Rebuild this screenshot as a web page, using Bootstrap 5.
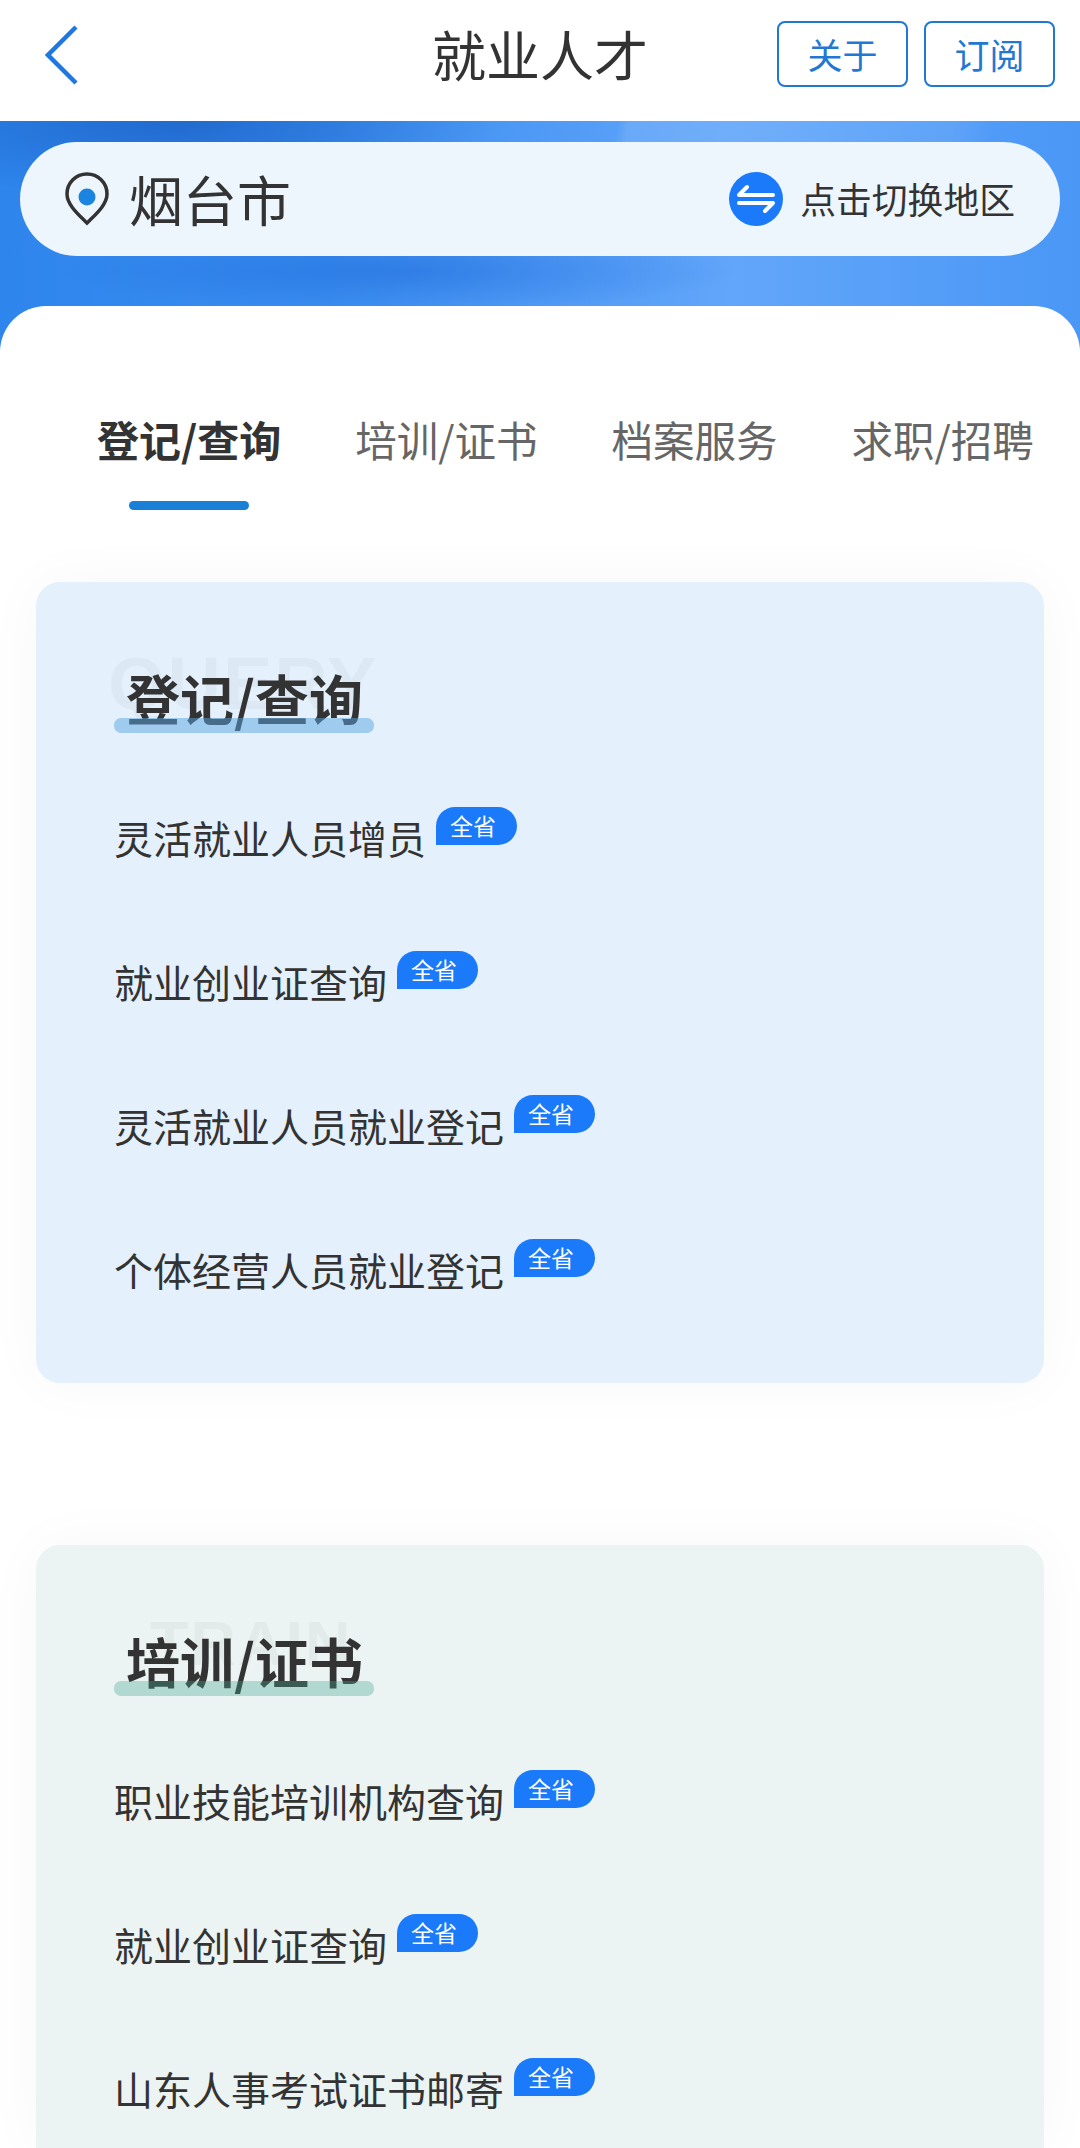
<!DOCTYPE html>
<html lang="zh">
<head>
  <meta charset="UTF-8" />
  <meta name="viewport" content="width=device-width, initial-scale=1" />
  <title>就业人才</title>
  <link href="https://cdn.jsdelivr.net/npm/bootstrap@5.3.2/dist/css/bootstrap.min.css" rel="stylesheet" />
  <style>
    body {
      background: #fff;
      color: #333;
      font-family: "Noto Sans CJK SC", "Liberation Sans", sans-serif;
    }
    .top-head { height: 121px; padding: 21px 25px 34px 45px; }
    .head-title { left: 0; right: 0; top: 23px; text-align: center; font-size: 54px; line-height: 62px; font-weight: 400; margin: 0; }
    .head-btn {
      width: 131px; height: 66px; padding: 0;
      font-size: 35px; line-height: 62px;
      color: #1f78d1; background: #fff;
      border: 2px solid #1f78d1; border-radius: 8px;
    }
    .banner {
      height: 230px; padding: 21px 20px 0;
      background:
        linear-gradient(100deg, transparent 57%, rgba(255,255,255,.1) 58%, rgba(255,255,255,.07) 88%, transparent 92%) no-repeat 0 0 / 100% 21px,
        radial-gradient(ellipse 320px 80px at 180px 0, rgba(20,85,185,.6), transparent),
        radial-gradient(ellipse 340px 40px at 400px 150px, rgba(25,100,215,.45), transparent),
        linear-gradient(90deg, #2e85ec 0%, #3a8df0 30%, #62a6fa 68%, #4a97f6 100%);
    }
    .city-pill { height: 114px; padding: 0 45px 0 45px; border-radius: 57px; background: #edf5fd; }
    .city-name { font-size: 54px; line-height: 60px; margin-left: 20px; }
    .swap-text { font-size: 35.8px; margin-left: 17px; }
    .sheet { margin-top: -45px; background: #fff; border-radius: 46px 46px 0 0; position: relative; padding: 0 36px; }
    .tab-row { height: 276px; padding: 108px 0 0 61px; gap: 74px; }
    .tab-item { position: relative; font-size: 41.5px; line-height: 50px; color: #666; }
    .tab-item.on { font-size: 42px; color: #333; font-weight: 700; }
    .tab-item.on::after {
      content: ""; position: absolute; left: 32px; top: 87px;
      width: 120px; height: 9px; border-radius: 5px; background: #1a7fd6;
    }
    .svc-card {
      padding: 0 0 0 78px;
      border-radius: 24px;
      box-shadow: 0 0 60px rgba(0,0,0,.035);
    }
    .svc-blue { height: 801px; margin-bottom: 162px; background: #e4f1fc; }
    .svc-green { height: 603px; border-radius: 24px 24px 0 0; overflow: hidden; background: #ebf4f3; }
    .svc-head { position: relative; height: 150px; padding-top: 86px; }
    .ghost {
      position: absolute; top: 67px; left: -6px;
      font-family: "Liberation Sans", sans-serif; font-size: 74px; line-height: 70px; font-weight: 700;
      letter-spacing: 2px; color: rgba(0,0,0,.03);
    }
    .svc-green .ghost { left: 36px; top: 63px; font-size: 63px; color: rgba(0,0,0,.035); }
    .svc-title { position: relative; display: inline-block; margin: 0; padding: 0 11px 0 12px; font-size: 54px; line-height: 60px; font-weight: 700; color: #333; }
    .svc-title::after {
      content: ""; position: absolute; left: 0; right: 0; top: 50px;
      height: 15px; border-radius: 7px; background: rgba(90,165,225,.5);
    }
    .svc-green .svc-title::after { background: rgba(70,165,145,.35); }
    .svc-row { height: 144px; display: flex; align-items: flex-start; padding-top: 79px; font-size: 39px; line-height: 52px; }
    .area-tag {
      display: inline-block; width: 81px; height: 38px; margin: -4px 0 0 10px; padding-left: 14px;
      border-radius: 19px 19px 19px 0; background: #1a7afa; color: #fff;
      font-size: 23px; line-height: 36px;
    }
  </style>
</head>
<body>

<header class="top-head d-flex justify-content-between position-relative">
  <svg class="mt-1" width="33" height="60" viewBox="0 0 33 60" fill="none" stroke="#1f78e0" stroke-width="4.5"><path d="M31 2 L3 30 L31 58" /></svg>
  <h1 class="head-title position-absolute">就业人才</h1>
  <div class="d-flex gap-3 position-relative">
    <button class="btn head-btn" type="button">关于</button>
    <button class="btn head-btn" type="button">订阅</button>
  </div>
</header>

<section class="banner">
  <div class="city-pill d-flex align-items-center">
    <svg width="44" height="54" viewBox="0 0 44 54">
      <path d="M22 2 A20 20 0 0 1 42 22 C42 33 30 43 22 51 C14 43 2 33 2 22 A20 20 0 0 1 22 2 Z" fill="none" stroke="#333" stroke-width="3.500" />
      <circle cx="22" cy="25" r="8.500" fill="#1a84e0" />
    </svg>
    <span class="city-name">烟台市</span>
    <div class="ms-auto d-flex align-items-center">
      <svg width="54" height="54" viewBox="0 0 54 54">
        <circle cx="27" cy="27" r="27" fill="#1a7afa" />
        <path d="M44 23 H10 L18 15 M10 31 H44 L36 39" fill="none" stroke="#fff" stroke-width="4" stroke-linecap="round" stroke-linejoin="round" />
      </svg>
      <span class="swap-text">点击切换地区</span>
    </div>
  </div>
</section>

<main class="sheet">
  <nav class="tab-row d-flex">
    <div class="tab-item on">登记/查询</div>
    <div class="tab-item">培训/证书</div>
    <div class="tab-item">档案服务</div>
    <div class="tab-item">求职/招聘</div>
  </nav>

  <section class="svc-card svc-blue">
    <div class="svc-head">
      <span class="ghost">QUERY</span>
      <h2 class="svc-title">登记/查询</h2>
    </div>
    <div class="svc-row">灵活就业人员增员<span class="area-tag">全省</span></div>
    <div class="svc-row">就业创业证查询<span class="area-tag">全省</span></div>
    <div class="svc-row">灵活就业人员就业登记<span class="area-tag">全省</span></div>
    <div class="svc-row">个体经营人员就业登记<span class="area-tag">全省</span></div>
  </section>

  <section class="svc-card svc-green">
    <div class="svc-head">
      <span class="ghost">TRAIN</span>
      <h2 class="svc-title">培训/证书</h2>
    </div>
    <div class="svc-row">职业技能培训机构查询<span class="area-tag">全省</span></div>
    <div class="svc-row">就业创业证查询<span class="area-tag">全省</span></div>
    <div class="svc-row">山东人事考试证书邮寄<span class="area-tag">全省</span></div>
  </section>
</main>

<script src="https://cdn.jsdelivr.net/npm/bootstrap@5.3.2/dist/js/bootstrap.bundle.min.js"></script>
</body>
</html>
